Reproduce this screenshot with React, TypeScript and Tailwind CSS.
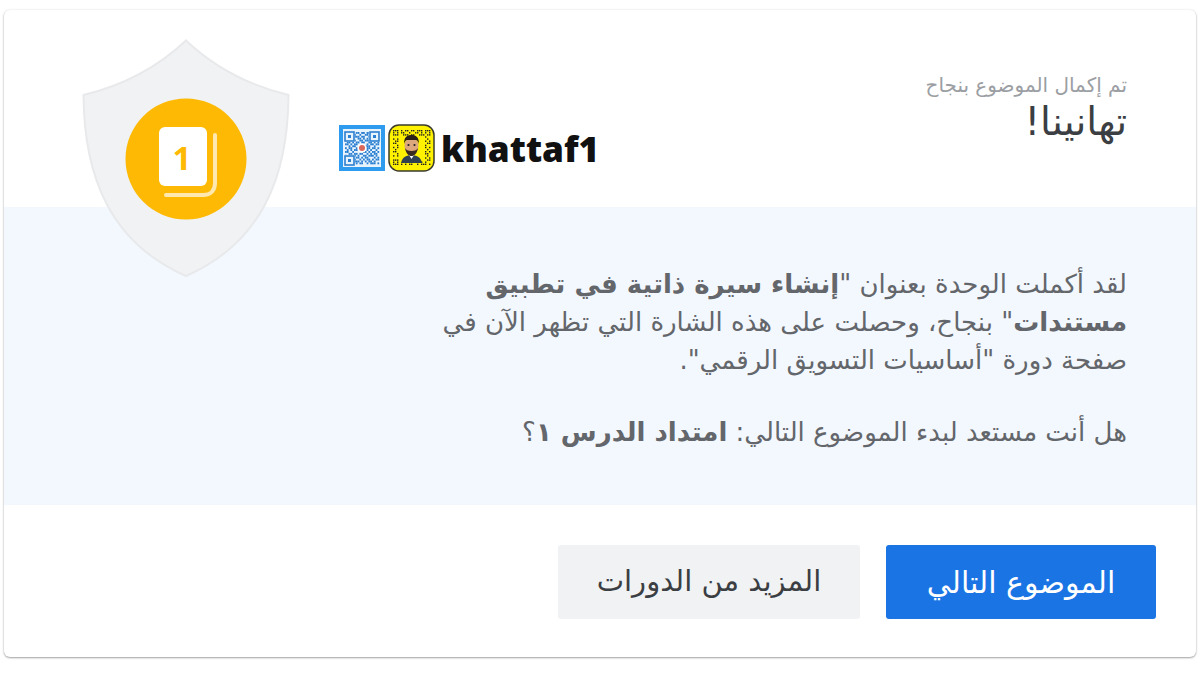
const QR_ROWS = [
  "1110101101101110111",
  "1010110010011010101",
  "1110011101100111011",
  "0001100110101000100",
  "1011010011011101010",
  "0110101101100110101",
  "1101011000001011011",
  "0010110000011100100",
  "1011001000001101101",
  "0101011000001010010",
  "1100100000110101101",
  "0011011011001010110",
  "1010110100110111010",
  "0001001101011000101",
  "1110110010101101011",
  "1010011101010110100",
  "1110101011001011101",
];

const FINDERS = [
  [6, 7],
  [31, 7],
  [6, 31],
];

function QrTile() {
  return (
    <svg width="46" height="46" viewBox="0 0 46 46" className="shrink-0">
      <rect width="46" height="46" fill="#2f9bee" />
      <rect x="4" y="4" width="38" height="38" fill="#e8f4fd" />
      {QR_ROWS.map((row, y) =>
        row.split("").map((cell, x) =>
          cell === "1" ? (
            <rect key={`${x}-${y}`} x={6 + x * 1.8} y={7 + y * 1.9} width="1.8" height="1.9" fill="#2b7fd0" />
          ) : null
        )
      )}
      {FINDERS.map(([x, y]) => (
        <g key={`${x}-${y}`}>
          <rect x={x - 1} y={y - 1} width="11" height="11" fill="#e8f4fd" />
          <rect x={x} y={y} width="9" height="9" fill="none" stroke="#2b7fd0" strokeWidth="1.6" />
          <rect x={x + 3} y={y + 3} width="3" height="3" fill="#2b7fd0" />
        </g>
      ))}
      <circle cx="23" cy="23" r="4.5" fill="#fff" />
      <circle cx="23" cy="23" r="3" fill="#d9685c" />
    </svg>
  );
}

function SnapTile() {
  return (
    <svg width="47" height="48" viewBox="0 0 47 48" className="shrink-0">
      <rect x="1" y="1" width="45" height="46" rx="10" fill="#fff200" stroke="#3a3a2a" strokeWidth="1.5" />
      {QR_ROWS.map((row, y) =>
        row.split("").map((cell, x) =>
          cell === "1" && (x < 3 || x > 15 || y < 3 || y > 14) ? (
            <rect key={`${x}-${y}`} x={5 + x * 2} y={6 + y * 2.1} width="1.4" height="1.4" fill="#222" />
          ) : null
        )
      )}
      <path d="M13 39c1-6 6-8 10.500-8s9.500 2 10.500 8z" fill="#2f4050" />
      <path d="M21 31l2.500 4 2.500-4z" fill="#fff" />
      <ellipse cx="23.500" cy="22" rx="7" ry="8.500" fill="#dca77c" />
      <path d="M16 20c0-7 3-9 7.500-9s7.500 2 7.500 9c-1-3-2-4-3-4h-9c-1 0-2 1-3 4z" fill="#2b2018" />
      <path d="M17 24c1 6 4 8 6.500 8s5.500-2 6.500-8c-1 2-3 3-6.500 3s-5.500-1-6.500-3z" fill="#3a2a20" />
      <circle cx="20.500" cy="21" r="1.100" fill="#222" />
      <circle cx="26.500" cy="21" r="1.100" fill="#222" />
    </svg>
  );
}

function ShieldBadge() {
  return (
    <svg width="210" height="240" viewBox="0 0 210 240" className="absolute left-[77px] top-[28px]">
      <path
        d="M105 2.500C78 28 44 47 2.500 57C3 140 30 205 105 238C180 205 207 140 207.500 57C166 47 132 28 105 2.500Z"
        fill="#f1f2f4"
        stroke="#e8e9eb"
        strokeWidth="2"
      />
      <circle cx="105" cy="121" r="60.500" fill="#fdb903" />
      <path d="M134 97V145C134 152 130 157 122 157H85" fill="none" stroke="#ffe8b0" strokeWidth="4" strokeLinecap="round" />
      <rect x="78" y="89" width="48" height="59" rx="6" fill="#fff" />
      <text x="101" y="132" textAnchor="middle" fontFamily="'Open Sans', sans-serif" fontSize="33" fontWeight="700" fill="#fdb903">1</text>
    </svg>
  );
}

export default function App() {
  return (
    <div className="h-[675px] w-[1200px] overflow-hidden bg-white pl-[4px] pr-[4px] pt-[10px]">
      <div
        dir="rtl"
        className="relative h-[647px] overflow-hidden rounded-md bg-white font-['DejaVu_Sans',sans-serif] shadow-[0_1px_2px_rgba(0,0,0,0.35),0_0_3px_rgba(0,0,0,0.08)]"
      >
        <header className="flex h-[197px] items-start justify-between pr-[69px]">
          <div className="pt-[62px]">
            <p className="text-[20px] leading-[26px] text-[#9b9ea3]">تم إكمال الموضوع بنجاح</p>
            <h1 className="mt-[3px] text-[39px] leading-[42px] text-[#3b3e42]">تهانينا!</h1>
          </div>
          <div dir="ltr" className="ml-[335px] flex items-center gap-[3px] pt-[114px]">
            <QrTile />
            <SnapTile />
            <span className="ml-[3px] font-['Open_Sans',sans-serif] text-[35.2px] font-extrabold leading-[48px] text-[#111]">khattaf1</span>
          </div>
        </header>

        <section className="h-[298px] bg-[#f3f8fe] pl-[69px] pr-[69px] pt-[58px] text-[26px] leading-[38px] text-[#63666b]">
          <p className="max-w-[700px]">
            لقد أكملت الوحدة بعنوان "<strong className="font-bold">إنشاء سيرة ذاتية في تطبيق مستندات</strong>" بنجاح، وحصلت على هذه الشارة التي تظهر الآن في صفحة دورة "أساسيات التسويق الرقمي".
          </p>
          <p className="mt-[34px]">
            هل أنت مستعد لبدء الموضوع التالي: <strong className="font-bold">امتداد الدرس ١</strong>؟
          </p>
        </section>

        <footer className="flex gap-[26px] pr-[40px] pt-[40px]">
          <button className="flex h-[74px] w-[270px] items-center justify-center rounded-[3px] bg-[#1b74e4] text-[30px] text-white">الموضوع التالي</button>
          <button className="flex h-[74px] w-[302px] items-center justify-center rounded-[3px] bg-[#f1f2f4] text-[29px] text-[#3b3e42]">المزيد من الدورات</button>
        </footer>

        <ShieldBadge />
      </div>
    </div>
  );
}
